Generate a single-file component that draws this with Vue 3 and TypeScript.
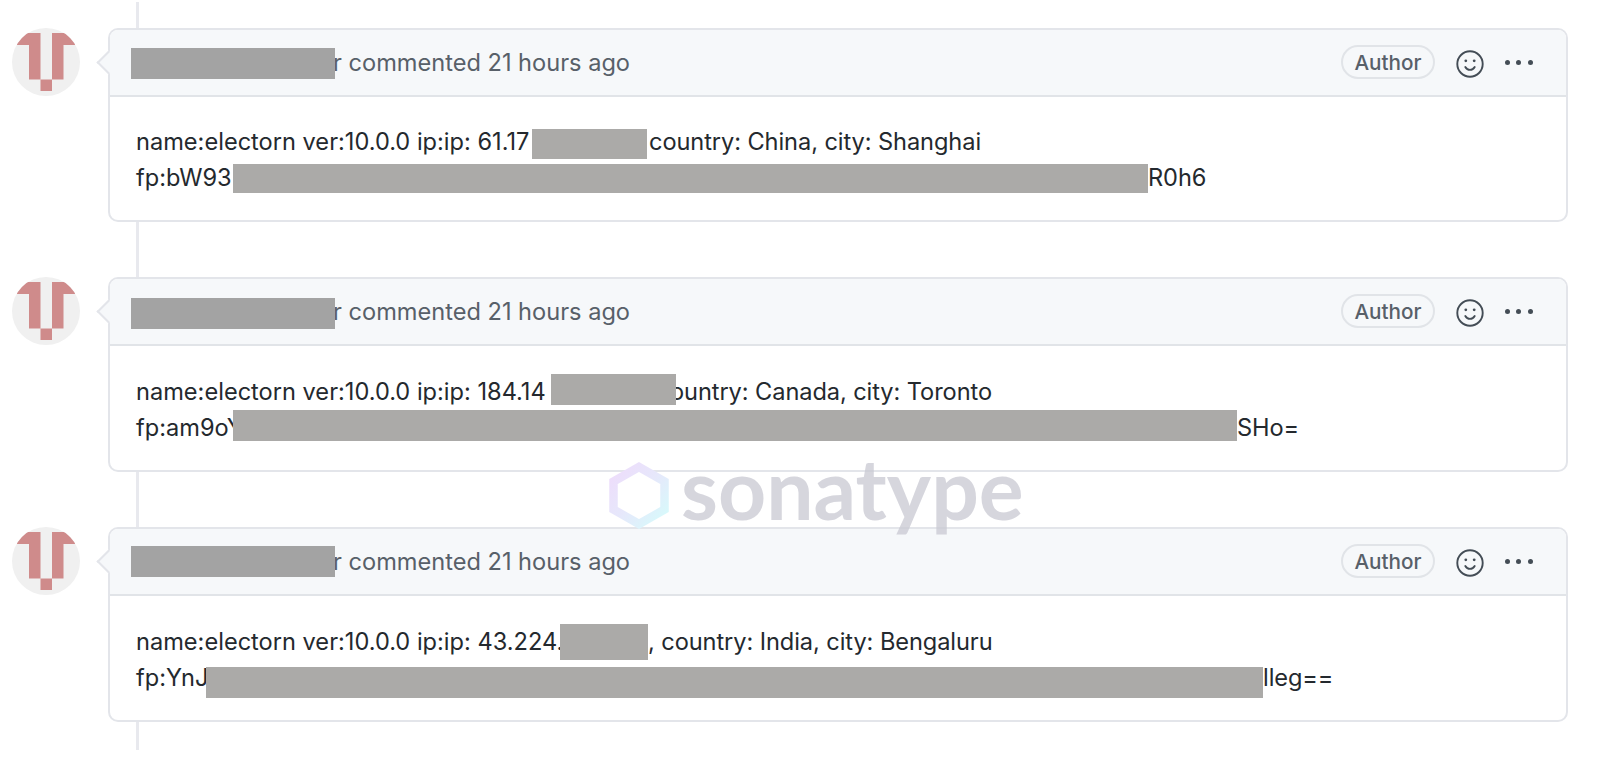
<template>
  <div class="page">
    <div class="timeline-line"></div>
    <div class="comments">
      <div v-for="(c, i) in comments" :key="i" class="comment">
        <svg class="avatar" viewBox="0 0 68 68" aria-hidden="true">
          <defs>
            <clipPath :id="`av${i}`"><circle cx="34" cy="34" r="34" /></clipPath>
          </defs>
          <circle cx="34" cy="34" r="34" fill="#f0f0f0" />
          <path
            :clip-path="`url(#av${i})`"
            fill="#cf8b8b"
            d="M5 5h23.500v46.500h-11.500V17H5zM40 5h23v12H51.500v34.500H40zM28.500 51.500H40V63H28.500z"
          />
        </svg>
        <div class="card">
          <div class="card-header">
            <div class="who">
              <span class="redact head-redact" :style="{ transform: `translateY(${c.headDy}px)` }"></span>
              <span class="who-text">r commented 21 hours ago</span>
            </div>
            <div class="actions">
              <span class="pill">Author</span>
              <svg class="smiley" viewBox="0 0 28 28" fill="none" stroke="#444d56" stroke-width="1.9" stroke-linecap="round">
                <circle cx="14" cy="14" r="12.7" />
                <path d="M9.3 17c1.1 1.9 2.7 2.9 4.7 2.9s3.6-1 4.7-2.9" />
                <circle cx="9.8" cy="10.8" r="1.4" fill="#444d56" stroke="none" />
                <circle cx="18.2" cy="10.8" r="1.4" fill="#444d56" stroke="none" />
              </svg>
              <div class="dots"><i></i><i></i><i></i></div>
            </div>
          </div>
          <div class="card-body" :style="{ paddingTop: c.bodyTop + 'px' }">
            <div v-for="(l, j) in c.lines" :key="j" class="line">
              <span class="prefix" :style="{ width: l.at + 'px' }">{{ l.before }}</span>
              <span
                class="redact"
                :style="{ width: l.width + 'px', height: l.h + 'px', transform: `translateY(${l.dy}px)` }"
              ></span>
              <span class="after" :style="{ marginLeft: l.pad + 'px' }">{{ l.after }}</span>
            </div>
          </div>
        </div>
      </div>
    </div>
    <div class="watermark">
      <svg class="hex" viewBox="0 0 60 67" fill="none">
        <defs>
          <linearGradient id="hexg" x1="0" y1="0" x2="1" y2="1">
            <stop offset="0" stop-color="#eedcfb" />
            <stop offset="0.5" stop-color="#e6e8fb" />
            <stop offset="1" stop-color="#d6fbfb" />
          </linearGradient>
        </defs>
        <path d="M30 5 55.500 19.500v28L30 62 4.500 47.500v-28z" stroke="url(#hexg)" stroke-width="8.500" />
      </svg>
      <span class="brand">sonatype</span>
    </div>
  </div>
</template>

<script setup lang="ts">
interface Line {
  before: string
  at: number
  width: number
  h: number
  dy: number
  pad: number
  after: string
}

// at = where the grey block starts, measured from the text's left edge
const comments: { headDy: number; bodyTop: number; lines: Line[] }[] = [
  {
    headDy: 1,
    bodyTop: 27,
    lines: [
      { before: 'name:electorn ver:10.0.0 ip:ip: 61.17', at: 396, width: 115, h: 30, dy: 2, pad: 2, after: 'country: China, city: Shanghai' },
      { before: 'fp:bW93', at: 97, width: 915, h: 29, dy: 1, pad: 0, after: 'R0h6' }
    ]
  },
  {
    headDy: 2,
    bodyTop: 28,
    lines: [
      { before: 'name:electorn ver:10.0.0 ip:ip: 184.14', at: 415, width: 125, h: 31, dy: -2, pad: -6, after: 'ountry: Canada, city: Toronto' },
      { before: 'fp:am9oY', at: 97, width: 1004, h: 31, dy: -2, pad: 0, after: 'SHo=' }
    ]
  },
  {
    headDy: 0,
    bodyTop: 28,
    lines: [
      { before: 'name:electorn ver:10.0.0 ip:ip: 43.224.', at: 424, width: 88, h: 36, dy: 0, pad: 0, after: ', country: India, city: Bengaluru' },
      { before: 'fp:YnJ', at: 70, width: 1057, h: 31, dy: 5, pad: 0, after: 'lleg==' }
    ]
  }
]
</script>

<style>
html,
body {
  background: #fff;
}
</style>

<style scoped>
.page {
  position: relative;
  width: 1600px;
  height: 764px;
  overflow: hidden;
  font-family: Inter, 'Liberation Sans', sans-serif;
  background: #fff;
}

.timeline-line {
  position: absolute;
  left: 136px;
  top: 2px;
  width: 3px;
  height: 748px;
  background: #e8e9ee;
}

.comments {
  position: relative;
  display: flex;
  flex-direction: column;
  gap: 55px;
  padding: 28px 32px 0 12px;
}

.comment {
  display: flex;
  align-items: flex-start;
  gap: 28px;
}

.avatar {
  width: 68px;
  height: 68px;
  flex: none;
}

.card {
  position: relative;
  flex: 1;
  border: 2px solid #e3e5ea;
  border-radius: 10px;
  background: #fff;
}

.card::before {
  content: '';
  position: absolute;
  left: -10px;
  top: 24px;
  width: 17px;
  height: 17px;
  background: #f6f8fa;
  border-left: 2px solid #e3e5ea;
  border-bottom: 2px solid #e3e5ea;
  transform: rotate(45deg);
  box-sizing: border-box;
}

.card-header {
  position: relative;
  display: flex;
  align-items: center;
  justify-content: space-between;
  height: 67px;
  padding: 0 33.5px 0 21px;
  background: #f6f8fa;
  border-bottom: 2px solid #e1e4e8;
  border-radius: 8px 8px 0 0;
  box-sizing: border-box;
}

.who {
  display: flex;
  align-items: center;
}

.who-text {
  margin-left: -2px;
  font-size: 23.6px;
  color: #586069;
  white-space: nowrap;
}

.actions {
  display: flex;
  align-items: center;
}

.pill {
  display: flex;
  align-items: center;
  height: 34px;
  margin-bottom: 1px;
  padding: 0 11px;
  border: 2px solid #e1e4e8;
  border-radius: 17px;
  font-size: 20.7px;
  font-weight: 500;
  color: #586069;
  box-sizing: border-box;
}

.smiley {
  width: 28px;
  height: 28px;
  margin-top: 2px;
  margin-left: 21px;
}

.dots {
  display: flex;
  gap: 6.5px;
  margin-left: 21px;
}

.dots i {
  display: block;
  width: 5px;
  height: 5px;
  border-radius: 50%;
  background: #444d56;
}

.card-body {
  padding: 0 0 25px 26px;
}

.line {
  display: flex;
  align-items: center;
  height: 35.5px;
  font-size: 23.6px;
  color: #24292e;
  white-space: nowrap;
}

.prefix {
  flex: none;
}

.redact {
  display: block;
  position: relative;
  z-index: 1;
  flex: none;
  background: #abaaa8;
}

.head-redact {
  width: 204px;
  height: 31px;
  background: #a3a3a3;
}

.after {
  flex: none;
  letter-spacing: -0.08px;
}

.watermark {
  position: absolute;
  left: 609px;
  top: 462px;
  z-index: 2;
  display: flex;
  align-items: flex-start;
  gap: 12px;
  pointer-events: none;
}

.hex {
  width: 60px;
  height: 67px;
}

.brand {
  margin-top: -8px;
  font-family: Lato, Inter, sans-serif;
  font-size: 84px;
  font-weight: 700;
  line-height: 67px;
  color: rgba(200, 200, 210, 0.75);
}
</style>
